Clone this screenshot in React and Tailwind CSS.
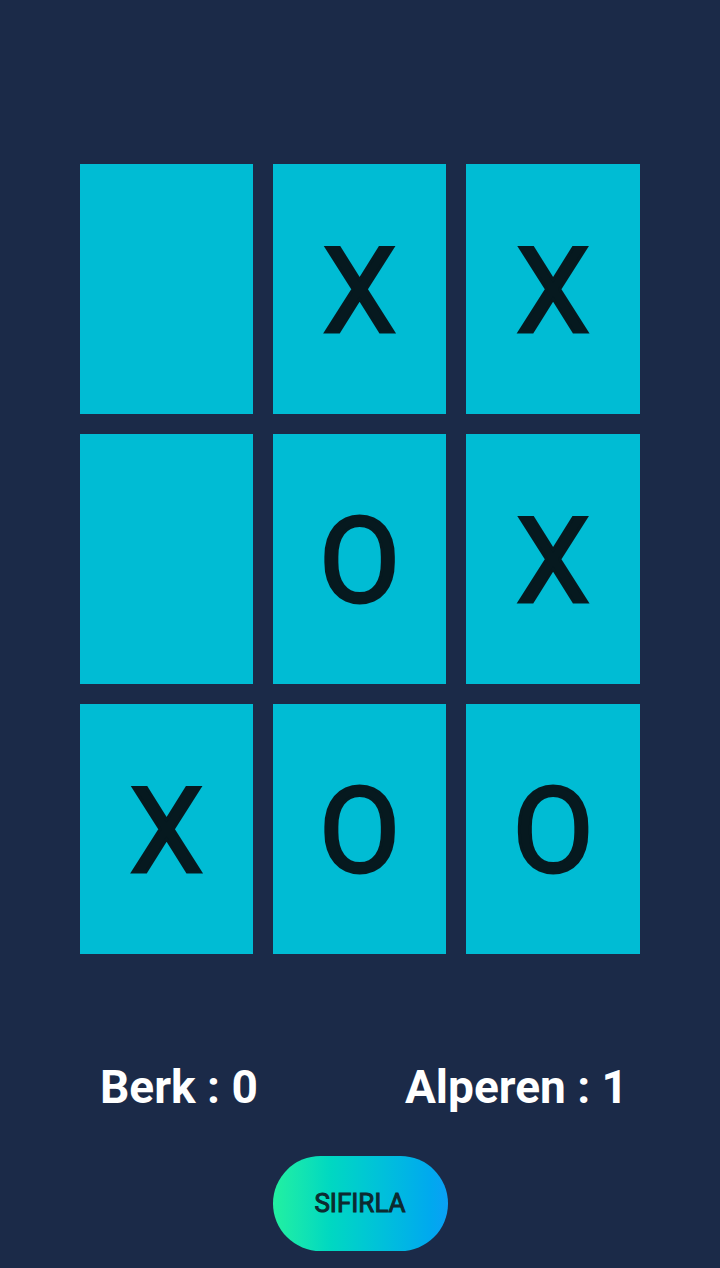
import React from "react";

const board = ["", "X", "X", "", "O", "X", "X", "O", "O"];

export default function App() {
    return (
        <div
            className="w-[720px] h-[1268px] bg-[#1b2a48] flex flex-col items-center"
            style={{ fontFamily: "Roboto, 'Noto Sans', sans-serif" }}
        >
            <div className="mt-[164px] grid grid-cols-[173px_173px_174px] gap-x-[20px] gap-y-[20px]">
                {board.map((v, i) => (
                    <button
                        key={i}
                        className="h-[250px] bg-[#00bcd4] flex items-center justify-center text-[118px] leading-none font-normal text-[#06191f] [-webkit-text-stroke:3px_#06191f] pt-[6px]"
                    >
                        {v}
                    </button>
                ))}
            </div>

            <div className="w-full mt-[110px] flex justify-between pl-[100px] pr-[92px] text-white font-bold text-[46px] leading-none">
                <span>Berk : 0</span>
                <span>Alperen : 1</span>
            </div>

            <button className="mt-[46px] w-[175px] h-[95px] rounded-full bg-gradient-to-r from-[#22f0a0] to-[#0ba0f5] text-[#0c2a30] text-[26px] [-webkit-text-stroke:1px_#0c2a30]">
                SIFIRLA
            </button>
        </div>
    );
}
